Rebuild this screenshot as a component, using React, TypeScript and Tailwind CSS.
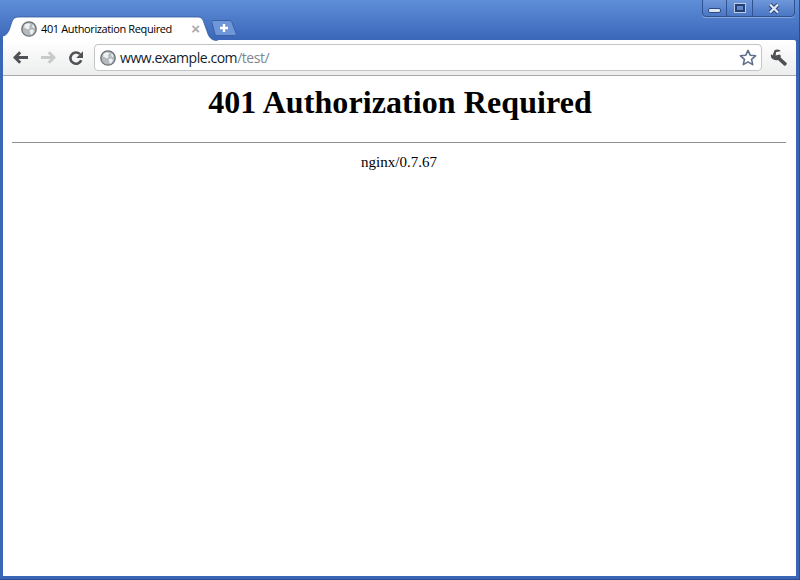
function Globe({ size = 16 }: { size?: number }) {
  return (
    <svg width={size} height={size} viewBox="0 0 16 16">
      <circle cx="8" cy="8" r="7.2" fill="#b4b9bd" stroke="#6a6f73" strokeWidth="1.3" />
      <path d="M4 3.2 7.5 2.2 9.5 3.5 8 5.5 8.8 7 6.5 8.5 4.5 7 3 6.5Z" fill="#eef0f1" />
      <path d="M8.5 9 11.5 8.5 13 10 11 13.5 9.5 13 9 11Z" fill="#eef0f1" />
      <path d="M11 3.5 13 5 13.5 7 11.5 6.5Z" fill="#eef0f1" />
    </svg>
  );
}

function TabShape() {
  return (
    <svg className="absolute inset-0" width="216" height="25" viewBox="0 0 216 25">
      <path
        d="M0 25V20C3 19.5 5 17 6.5 13L9 5.5C10 2.5 12 1 16 1H195C198 1 199.6 2.5 200.5 5.5L205 18C206.5 22 209 24.5 215 24.8V25Z"
        fill="#ffffff"
      />
      <path
        d="M0 20C3 19.5 5 17 6.5 13L9 5.5C10 2.5 12 1 16 1H195C198 1 199.6 2.5 200.5 5.5L205 18C206.5 22 209 24.5 215 24.8"
        fill="none"
        stroke="#33589c"
        strokeWidth="0.8"
      />
    </svg>
  );
}

function NewTab() {
  return (
    <svg width="26" height="16" viewBox="0 0 26 16">
      <path d="M.8 2.5C.5 1.2 1.2 .5 2.5 .5H18C19.5 .5 20.5 1.2 21 2.5L25 13C25.4 14.3 24.8 15.5 23.5 15.5H6.5C5 15.5 4.2 14.8 3.8 13.5Z" fill="#6f96d8" stroke="#3a60a5" />
      <path d="M13 4V12M9 8H17" stroke="#ffffff" strokeWidth="2.4" />
    </svg>
  );
}

function Arrow({ color, flip }: { color: string; flip?: boolean }) {
  return (
    <svg width="15" height="13" viewBox="0 0 15 13" className={flip ? "-scale-x-100" : ""}>
      <path d="M7.2 1.2 2 6.5 7.2 11.8M2.5 6.5H15" fill="none" stroke={color} strokeWidth="3" />
    </svg>
  );
}

function Reload() {
  return (
    <svg width="16" height="16" viewBox="0 0 16 16">
      <path d="M13.2 10.2A5.6 5.6 0 1 1 12 4.2" fill="none" stroke="#505356" strokeWidth="2.6" />
      <path d="M15 1.2V8H8.2Z" fill="#505356" />
    </svg>
  );
}

function Star() {
  return (
    <svg width="18" height="17" viewBox="0 0 18 17">
      <path d="M9 1.4 11.2 6.2 16.6 6.8 12.6 10.3 13.7 15.6 9 12.9 4.3 15.6 5.4 10.3 1.4 6.8 6.8 6.2Z" fill="#ffffff" stroke="#5d6f8a" strokeWidth="1.6" strokeLinejoin="round" />
    </svg>
  );
}

function Wrench() {
  return (
    <svg width="18" height="18" viewBox="0 0 18 18">
      <path d="M4.5 1.2C6 .4 8.4 .4 10 1.2L10.6 2.2 6.2 3 5.6 6.4 9.5 5.6C11 6 11 7.6 10.6 8.4L16.6 14C17.5 15 15.2 17.6 14 16.6L8 10.9C6 11.6 3 11.2 1.2 8.6 .8 7.4 .8 6 1 5L2.6 6.6Z" fill="#4e5154" />
    </svg>
  );
}

function CloseIcon() {
  return (
    <svg width="12" height="11" viewBox="0 0 12 11">
      <path d="M2 1.5 10 9.5M10 1.5 2 9.5" stroke="#24406f" strokeWidth="4" />
      <path d="M2 1.5 10 9.5M10 1.5 2 9.5" stroke="#dfe8f6" strokeWidth="2.4" />
    </svg>
  );
}

export default function App() {
  return (
    <div className="relative w-[800px] h-[580px] overflow-hidden flex flex-col pl-[3px] pr-[3px] pb-[3px] border-r border-b border-[#2b4d8c] bg-gradient-to-b from-[#5f8ed8] to-[#3a66b8] to-[7%] font-['Liberation_Sans',sans-serif]">
      {/* window buttons */}
      <div className="absolute top-[-1px] left-[702px] w-[93px] h-[18px] flex rounded-b-[4px] border border-[#2f5290] bg-gradient-to-b from-[#6f97da] to-[#4a76c4] shadow-[0_1px_0_#86a8e0]">
        <div className="w-[24px] flex items-center justify-center border-r border-[#2f5290] pt-[4px]">
          <div className="w-[13px] h-[5px] rounded-[2px] bg-[#dce6f5] border border-[#2c4a80]" />
        </div>
        <div className="w-[26px] flex items-center justify-center border-r border-[#2f5290]">
          <div className="w-[10px] h-[8px] border-2 border-[#24406f] outline outline-1 outline-[#b8cbea]" />
        </div>
        <div className="flex-1 flex items-center justify-center">
          <CloseIcon />
        </div>
      </div>

      {/* tab strip */}
      <div className="h-[40px] flex items-end shrink-0">
        <div className="relative w-[216px] h-[25px] -mb-px z-10 shrink-0 flex items-center pl-[18px] pr-[19px]">
          <TabShape />
          <div className="relative flex items-center w-full">
            <Globe />
            <span className="ml-[4px] text-[11px] leading-none text-black whitespace-nowrap font-['Open_Sans',sans-serif] tracking-[-0.38px]">
              401 Authorization Required
            </span>
            <span className="ml-auto text-[15px] leading-none text-[#a9abae] font-bold">×</span>
          </div>
        </div>
        <div className="-ml-[8px] mb-[4px] shrink-0">
          <NewTab />
        </div>
      </div>

      {/* toolbar */}
      <div className="h-[36px] shrink-0 flex items-center rounded-t-[2px] bg-gradient-to-b from-[#ffffff] to-[#eceded] border-b border-[#a8a8a8] pl-[10px] pr-[8px]">
        <Arrow color="#505356" />
        <div className="ml-[13px]">
          <Arrow color="#c7c9cb" flip />
        </div>
        <div className="ml-[12px]">
          <Reload />
        </div>
        <div className="ml-[10px] flex-1 h-[27px] flex items-center bg-white border border-[#c2c4c6] rounded-[4px] pl-[5px] pr-[4px]">
          <Globe />
          <span className="ml-[4px] text-[14px] leading-none whitespace-nowrap font-['Open_Sans',sans-serif] tracking-[-0.45px] text-[#141c2b]">
            www.example.com<span className="text-[#7d8794]">/test/</span>
          </span>
          <div className="ml-auto">
            <Star />
          </div>
        </div>
        <div className="ml-[8px]">
          <Wrench />
        </div>
      </div>

      {/* page */}
      <div className="flex-1 bg-white pl-[9px] pr-[10px] font-['Liberation_Serif',serif] text-black text-center">
        <h1 className="text-[32px] leading-[37px] font-bold pt-[8px] pl-[2px] tracking-[0.08px]">401 Authorization Required</h1>
        <hr className="mt-[21px] border-t border-b-0 border-[#8f8f8f]" />
        <div className="mt-[10px] text-[15px] leading-[18px]">nginx/0.7.67</div>
      </div>
    </div>
  );
}
